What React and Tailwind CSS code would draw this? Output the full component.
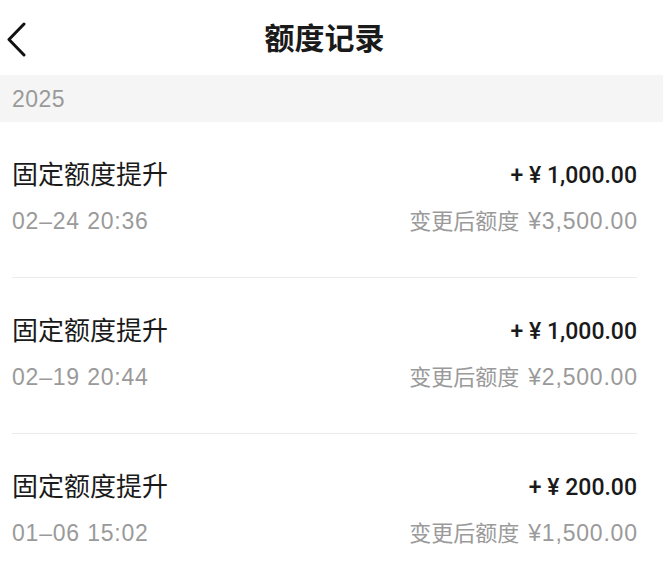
const records = [
  { title: '固定额度提升', time: '02–24 20:36', amount: '1,000.00', after: '¥3,500.00' },
  { title: '固定额度提升', time: '02–19 20:44', amount: '1,000.00', after: '¥2,500.00' },
  { title: '固定额度提升', time: '01–06 15:02', amount: '200.00', after: '¥1,500.00' },
];

function BackIcon() {
  return (
    <svg width="22" height="36" viewBox="0 0 22 36" fill="none">
      <polyline points="19,2 4,17.5 19,33" stroke="#111" strokeWidth="3" strokeLinecap="round" strokeLinejoin="round" />
    </svg>
  );
}

export default function App() {
  return (
    <div
      className="w-[663px] h-[574px] overflow-hidden bg-white"
      style={{ fontFamily: '"Liberation Sans", "Noto Sans CJK SC", sans-serif' }}
    >
      {/* Header */}
      <div className="h-[75px] grid grid-cols-[1fr_auto_1fr] items-center">
        <div className="pl-[5px] pt-[4px] flex items-center">
          <BackIcon />
        </div>
        <h1 className="text-[30px] leading-none font-bold text-[#1a1a1a] pt-[3px] mr-[14px]">额度记录</h1>
        <div />
      </div>

      {/* Year band */}
      <div className="h-[47px] bg-[#f5f5f5] flex items-center pl-[12px] pt-[2px]">
        <span className="text-[23px] leading-none tracking-[0.5px] text-[#9a9a9a]">2025</span>
      </div>

      {/* Records */}
      <div>
        {records.map((r, i) => (
          <div key={i} className="ml-[12px] mr-[26px] h-[156px] border-b border-[#ececec] pt-[39px]">
            <div className="flex items-center justify-between h-[28px] whitespace-nowrap">
              <span className="text-[26px] leading-none text-[#1a1a1a]">{r.title}</span>
              <span
                className="text-[23px] leading-none font-medium text-[#1a1a1a]"
                style={{ fontFamily: 'Roboto, "Liberation Sans", sans-serif' }}
              >
                + ¥ {r.amount}
              </span>
            </div>
            <div className="flex items-center justify-between h-[28px] mt-[18px] leading-none text-[#9a9a9a] whitespace-nowrap">
              <span className="text-[23px] tracking-[0.8px]">{r.time}</span>
              <span className="text-[22px] shrink-0">
                变更后额度<span className="ml-[9px] text-[23px] tracking-[0.8px] mr-[-0.8px]">{r.after}</span>
              </span>
            </div>
          </div>
        ))}
      </div>
    </div>
  );
}
